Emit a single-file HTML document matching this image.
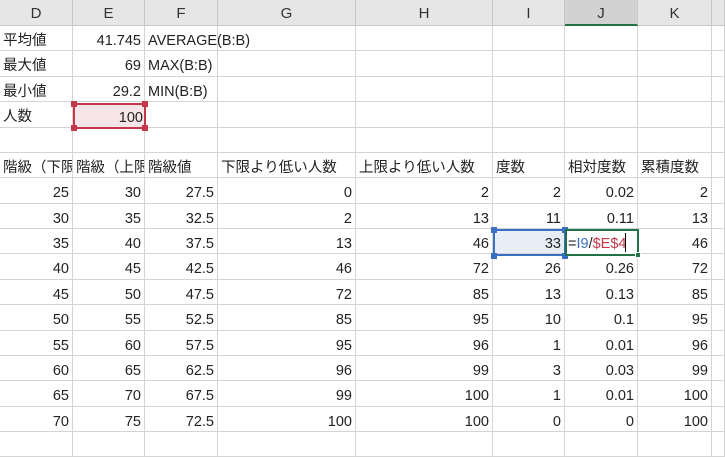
<!DOCTYPE html>
<html><head><meta charset="utf-8"><style>
*{margin:0;padding:0;box-sizing:border-box}
body{width:725px;height:446px;overflow:hidden;background:#fff;font-family:"Liberation Sans","Noto Sans CJK JP",sans-serif;font-size:14.5px;color:#222;position:relative}
.g{display:grid;grid-template-columns:73px 72px 73px 138px 137px 72px 73px 74px 13px;grid-template-rows:26px repeat(17,25.375px);position:absolute;left:0;top:0}
.g div{border-right:1px solid #d4d4d4;border-bottom:1px solid #d4d4d4;white-space:nowrap;overflow:hidden;line-height:18px;padding:6px 3px 0}
.g .h{background:#e6e6e6;text-align:center;border-color:#c8c8c8;line-height:18px;color:#333;font-size:15px;padding-top:5px}
.g .hs{background:#d2d2d2;border-bottom:2px solid #217346}
.g .r{text-align:right}
.g .v{overflow:visible}
.sel{position:absolute}
.sq{position:absolute;width:6px;height:6px}
</style></head><body>
<div class="g">
<div class="h">D</div><div class="h">E</div><div class="h">F</div><div class="h">G</div><div class="h">H</div><div class="h">I</div><div class="h hs">J</div><div class="h">K</div><div class="h"></div>

<div>平均値</div><div class="r">41.745</div><div class="v">AVERAGE(B:B)</div><div></div><div></div><div></div><div></div><div></div><div></div>
<div>最大値</div><div class="r">69</div><div class="v">MAX(B:B)</div><div></div><div></div><div></div><div></div><div></div><div></div>
<div>最小値</div><div class="r">29.2</div><div class="v">MIN(B:B)</div><div></div><div></div><div></div><div></div><div></div><div></div>
<div>人数</div><div class="r">100</div><div></div><div></div><div></div><div></div><div></div><div></div><div></div>
<div></div><div></div><div></div><div></div><div></div><div></div><div></div><div></div><div></div>
<div>階級（下限</div><div>階級（上限</div><div>階級値</div><div>下限より低い人数</div><div>上限より低い人数</div><div>度数</div><div>相対度数</div><div>累積度数</div><div></div>

<div class="r">25</div><div class="r">30</div><div class="r">27.5</div><div class="r">0</div><div class="r">2</div><div class="r">2</div><div class="r">0.02</div><div class="r">2</div><div></div>
<div class="r">30</div><div class="r">35</div><div class="r">32.5</div><div class="r">2</div><div class="r">13</div><div class="r">11</div><div class="r">0.11</div><div class="r">13</div><div></div>
<div class="r">35</div><div class="r">40</div><div class="r">37.5</div><div class="r">13</div><div class="r">46</div><div class="r" style="background:#e8eef8">33</div><div></div><div class="r">46</div><div></div>
<div class="r">40</div><div class="r">45</div><div class="r">42.5</div><div class="r">46</div><div class="r">72</div><div class="r">26</div><div class="r">0.26</div><div class="r">72</div><div></div>
<div class="r">45</div><div class="r">50</div><div class="r">47.5</div><div class="r">72</div><div class="r">85</div><div class="r">13</div><div class="r">0.13</div><div class="r">85</div><div></div>
<div class="r">50</div><div class="r">55</div><div class="r">52.5</div><div class="r">85</div><div class="r">95</div><div class="r">10</div><div class="r">0.1</div><div class="r">95</div><div></div>
<div class="r">55</div><div class="r">60</div><div class="r">57.5</div><div class="r">95</div><div class="r">96</div><div class="r">1</div><div class="r">0.01</div><div class="r">96</div><div></div>
<div class="r">60</div><div class="r">65</div><div class="r">62.5</div><div class="r">96</div><div class="r">99</div><div class="r">3</div><div class="r">0.03</div><div class="r">99</div><div></div>
<div class="r">65</div><div class="r">70</div><div class="r">67.5</div><div class="r">99</div><div class="r">100</div><div class="r">1</div><div class="r">0.01</div><div class="r">100</div><div></div>
<div class="r">70</div><div class="r">75</div><div class="r">72.5</div><div class="r">100</div><div class="r">100</div><div class="r">0</div><div class="r">0</div><div class="r">100</div><div></div>
<div></div><div></div><div></div><div></div><div></div><div></div><div></div><div></div><div></div>
</div>

<div class="sel" style="left:73px;top:103px;width:73px;height:26px;border:2px solid #c4384a;background:#f8e5e7"></div>
<div style="position:absolute;left:77px;top:109px;width:66px;line-height:18px;text-align:right">100</div>
<div class="sq" style="left:71px;top:101px;background:#c4384a"></div>
<div class="sq" style="left:142px;top:101px;background:#c4384a"></div>
<div class="sq" style="left:71px;top:125px;background:#c4384a"></div>
<div class="sq" style="left:142px;top:125px;background:#c4384a"></div>

<div class="sel" style="left:493px;top:229px;width:73px;height:27px;border:2px solid #3a6fc4"></div>
<div class="sq" style="left:491px;top:227px;background:#3a6fc4"></div>
<div class="sq" style="left:562px;top:227px;background:#3a6fc4"></div>
<div class="sq" style="left:491px;top:253px;background:#3a6fc4"></div>
<div class="sq" style="left:562px;top:253px;background:#3a6fc4"></div>

<div class="sel" style="left:565px;top:229px;width:74px;height:27px;border:2px solid #217346;background:#fff"></div>
<div style="position:absolute;left:568px;top:235px;line-height:18px;white-space:nowrap">=<span style="color:#3a6fc4">I9</span>/<span style="color:#c4384a">$E$4</span></div>
<div style="position:absolute;left:625px;top:233px;width:1px;height:19px;background:#000"></div>
<div class="sq" style="left:635px;top:252px;background:#217346;border:1px solid #fff"></div>
</body></html>
